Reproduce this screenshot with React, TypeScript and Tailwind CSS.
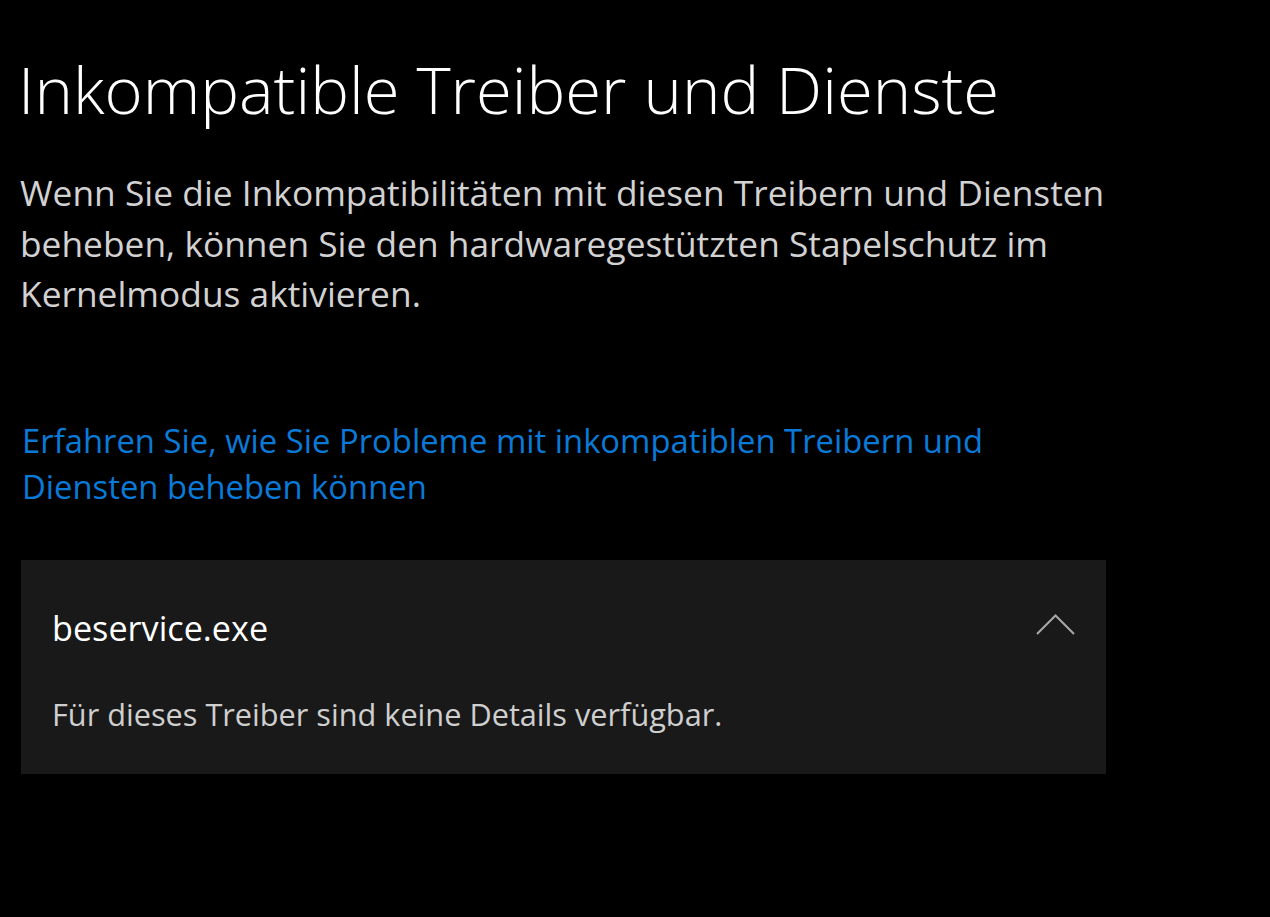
import React from "react";

export default function App() {
  const font = { fontFamily: '"Open Sans", "Noto Sans", sans-serif' };
  return (
    <div className="w-[1270px] h-[917px] bg-black overflow-hidden" style={font}>
      <div className="pl-[18px] pt-[44px]">
        <h1 className="text-[65.2px] leading-[90px] font-light text-white whitespace-nowrap">
          Inkompatible Treiber und Dienste
        </h1>
        <div className="mt-[33px] pl-[2px] text-[35.35px] leading-[50.5px] text-[#d2d2d2]">
          <div className="whitespace-nowrap">Wenn Sie die Inkompatibilitäten mit diesen Treibern und Diensten</div>
          <div className="whitespace-nowrap">beheben, können Sie den hardwaregestützten Stapelschutz im</div>
          <div className="whitespace-nowrap">Kernelmodus aktivieren.</div>
        </div>
        <div className="mt-[99px] pl-[4px] text-[32.8px] leading-[46px] text-[#0a7ad8]">
          <div className="whitespace-nowrap">Erfahren Sie, wie Sie Probleme mit inkompatiblen Treibern und</div>
          <div className="whitespace-nowrap">Diensten beheben können</div>
        </div>
        <div className="mt-[50.5px] ml-[3px] w-[1085px] h-[214px] bg-[#191919] pl-[31px] pr-[31px] pt-[48px]">
          <div className="flex items-start justify-between">
            <div className="text-[34.2px] leading-[40px] text-white">beservice.exe</div>
            <svg width="39" height="21" viewBox="0 0 39 21" className="mt-[6px]">
              <polyline points="1,20 19.5,1.5 38,20" fill="none" stroke="#a8a8a8" strokeWidth="2" />
            </svg>
          </div>
          <div className="mt-[48px] text-[30.7px] leading-[36px] text-[#cfcfcf]">
            Für dieses Treiber sind keine Details verfügbar.
          </div>
        </div>
      </div>
    </div>
  );
}
